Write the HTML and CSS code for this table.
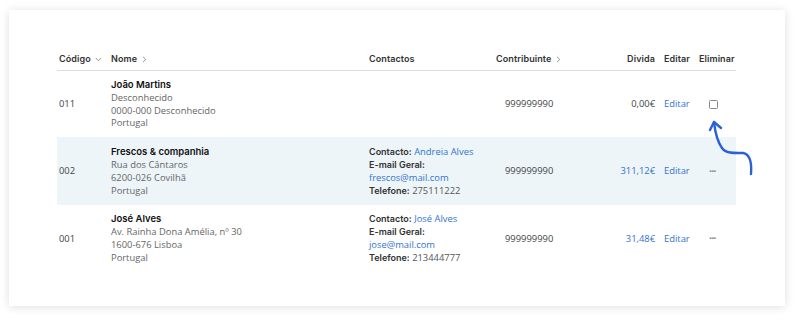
FILE: index.html
```html
<!DOCTYPE html>
<html>
<head>
<meta charset="utf-8">
<link rel="stylesheet" href="styles.css">
</head>
<body>
<div class="card">
  <table class="tbl">
    <colgroup>
      <col class="c-code"><col class="c-name"><col class="c-contact"><col class="c-nif"><col class="c-debt"><col class="c-edit"><col class="c-del">
    </colgroup>
    <thead>
      <tr>
        <th>Código <svg class="chev" width="7" height="5" viewBox="0 0 7 5"><path d="M0.8 1 L3.5 3.8 L6.2 1" fill="none" stroke="#888" stroke-width="0.9"/></svg></th>
        <th>Nome <svg class="chev" width="5" height="7" viewBox="0 0 5 7"><path d="M1 0.8 L3.8 3.5 L1 6.2" fill="none" stroke="#888" stroke-width="0.9"/></svg></th>
        <th>Contactos</th>
        <th class="nif-h">Contribuinte <svg class="chev" width="5" height="7" viewBox="0 0 5 7"><path d="M1 0.8 L3.8 3.5 L1 6.2" fill="none" stroke="#888" stroke-width="0.9"/></svg></th>
        <th class="num">Divida</th>
        <th class="edit-h">Editar</th>
        <th class="del-h">Eliminar</th>
      </tr>
    </thead>
    <tbody>
      <tr>
        <td class="code">011</td>
        <td><div class="nm">João Martins</div><div class="addr">Desconhecido<br>0000-000 Desconhecido<br>Portugal</div></td>
        <td></td>
        <td class="nif">999999990</td>
        <td class="num">0,00€</td>
        <td class="edit"><a>Editar</a></td>
        <td class="del"><span class="box"></span></td>
      </tr>
      <tr class="hl">
        <td class="code">002</td>
        <td><div class="nm">Frescos &amp; companhia</div><div class="addr">Rua dos Cântaros<br>6200-026 Covilhã<br>Portugal</div></td>
        <td class="ct"><b>Contacto:</b> <a>Andreia Alves</a><br><b>E-mail Geral:</b><br><a>frescos@mail.com</a><br><b>Telefone:</b> 275111222</td>
        <td class="nif">999999990</td>
        <td class="num blue">311,12€</td>
        <td class="edit"><a>Editar</a></td>
        <td class="del"><span class="dots">···</span></td>
      </tr>
      <tr>
        <td class="code">001</td>
        <td><div class="nm">José Alves</div><div class="addr">Av. Rainha Dona Amélia, nº 30<br>1600-676 Lisboa<br>Portugal</div></td>
        <td class="ct"><b>Contacto:</b> <a>José Alves</a><br><b>E-mail Geral:</b><br><a>jose@mail.com</a><br><b>Telefone:</b> 213444777</td>
        <td class="nif">999999990</td>
        <td class="num blue">31,48€</td>
        <td class="edit"><a>Editar</a></td>
        <td class="del"><span class="dots">···</span></td>
      </tr>
    </tbody>
  </table>
  <svg class="arrow" width="60" height="70" viewBox="0 0 60 70">
    <path d="M6 3 C7 12, 9 22, 14 29 C18 35, 28 34, 35 34 C41 35, 44 42, 43 55" fill="none" stroke="#2a62d6" stroke-width="2.4" stroke-linecap="round"/>
    <path d="M2 11 L6 3 L13 9" fill="none" stroke="#2a62d6" stroke-width="2.4" stroke-linecap="round" stroke-linejoin="round"/>
  </svg>
</div>
</body>
</html>
```
FILE: styles.css
```css
html, body { margin: 0; padding: 0; background: #fff; }
body { width: 800px; height: 320px; overflow: hidden; font-family: "Open Sans", sans-serif; }
.card {
  position: relative;
  margin: 10px 15px 0 9px;
  height: 296px;
  background: #fff;
  box-shadow: 0 1px 9px rgba(0,0,0,0.13);
  padding: 37px 0 0 48px;
  box-sizing: border-box;
}
.tbl { border-collapse: collapse; table-layout: fixed; width: 679px; }
.c-code { width: 52px; } .c-name { width: 258px; } .c-contact { width: 127px; }
.c-nif { width: 100px; } .c-debt { width: 64px; } .c-edit { width: 37px; } .c-del { width: 41px; }
th {
  font-family: "Inter", sans-serif; font-weight: 600; font-size: 9px; color: #333;
  text-align: left; padding: 0 0 0 2px; height: 23px; vertical-align: middle;
  border-bottom: 1px solid #ddd; letter-spacing: 0.1px; white-space: nowrap;
}
th.num { text-align: right; padding-right: 3px; }
th.edit-h { padding-left: 6px; }
th.del-h { padding-left: 4px; }
.chev { vertical-align: middle; margin-left: 2px; }
td {
  font-size: 9.4px; color: #444; padding: 8px 0 7px 2px; vertical-align: middle;
  line-height: 12.8px;
}
tr.hl td { background: #edf5f9; padding-top: 9px; padding-bottom: 8px; }
.code { color: #444; }
.nm { font-family: "Inter", sans-serif; font-weight: 600; color: #111; font-size: 9.5px; }
.addr { color: #666; }
.ct { color: #555; }
.ct b { font-family: "Inter", sans-serif; font-weight: 600; color: #333; font-size: 9px; }
a { color: #3274cf; }
.nif { padding-left: 11px; color: #444; }
td.num { text-align: right; padding-right: 3px; color: #444; }
td.num.blue { color: #3274cf; }
.edit { padding-left: 6px; }
.del { text-align: left; padding-left: 14px; }
.box { display: inline-block; width: 7px; height: 7px; border: 1px solid #888; border-radius: 1.5px; vertical-align: middle; }
.dots { color: #888; font-size: 11px; letter-spacing: -1px; font-weight: 700; }
.arrow { position: absolute; left: 699px; top: 109px; }
```
